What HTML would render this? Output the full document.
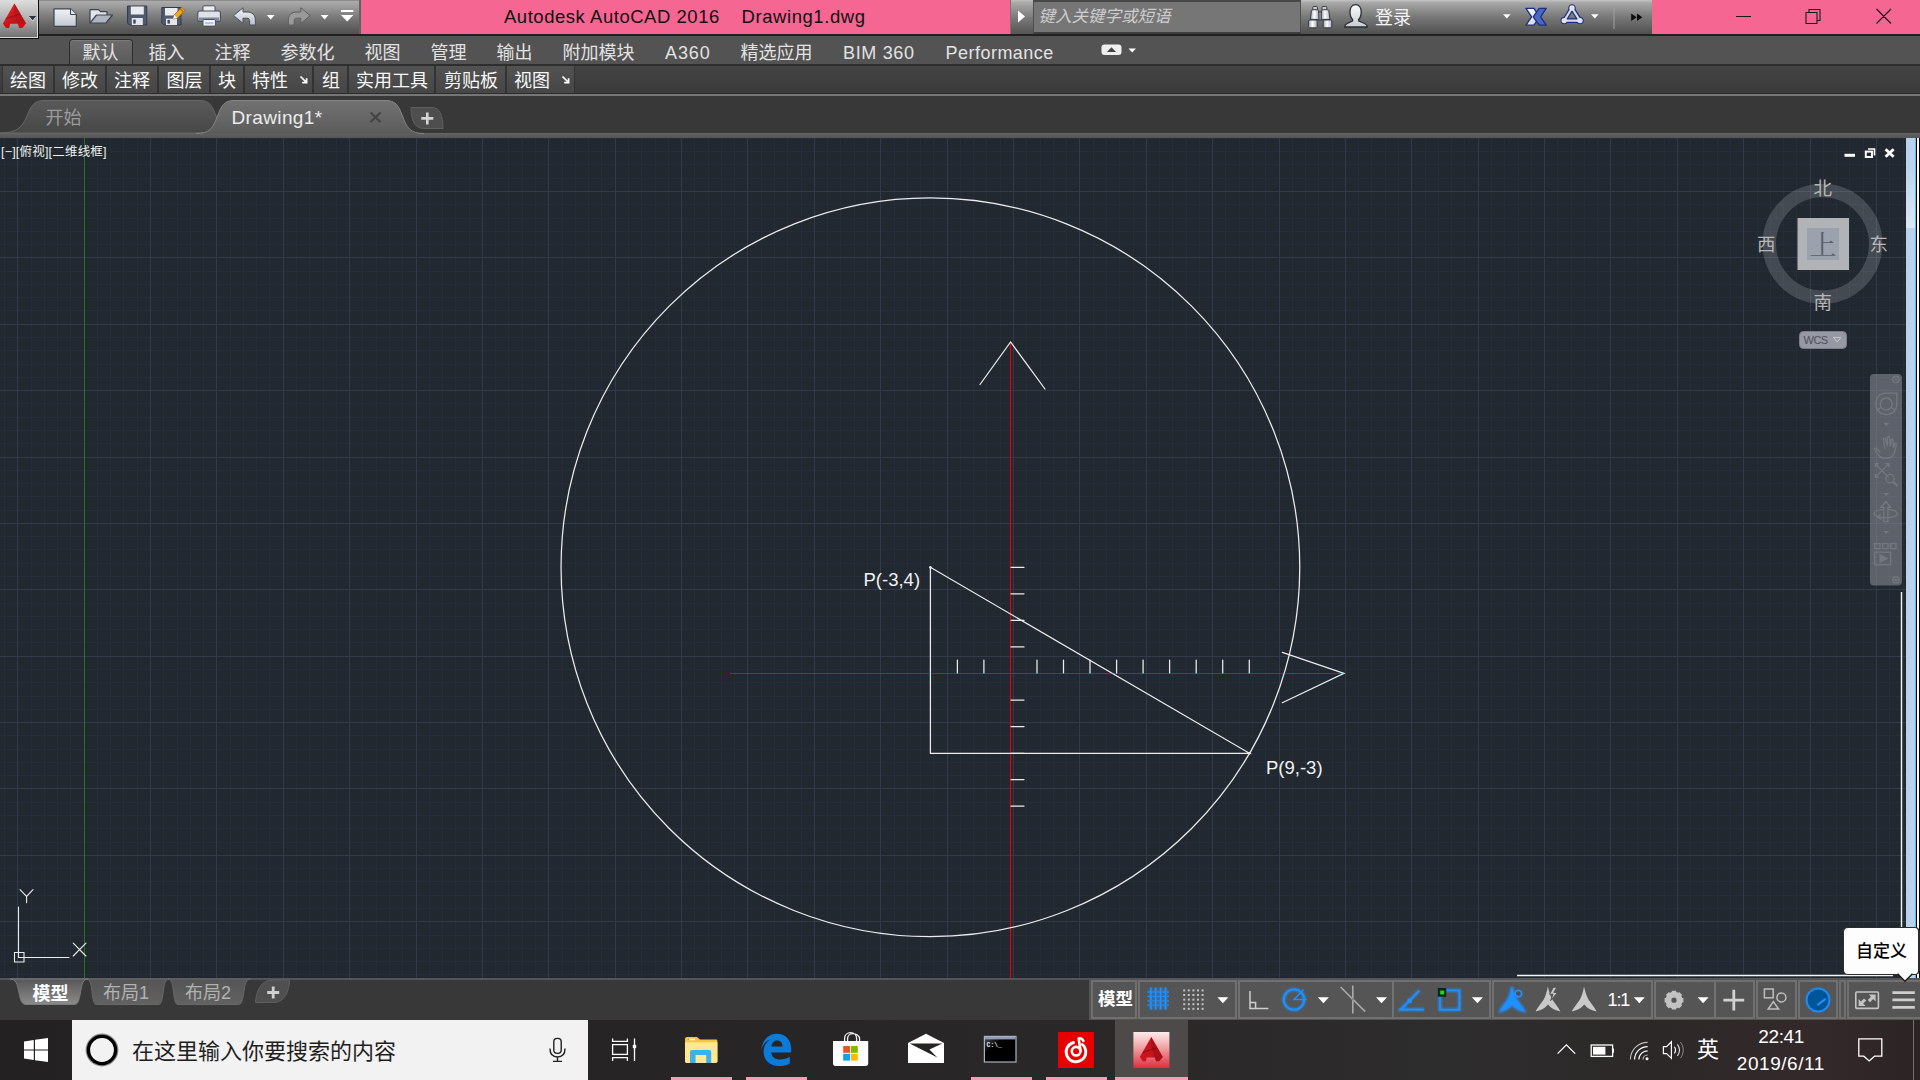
<!DOCTYPE html>
<html lang="zh-CN">
<head>
<meta charset="utf-8">
<title>Autodesk AutoCAD 2016 Drawing1.dwg</title>
<style>
*{box-sizing:border-box;margin:0;padding:0}
html,body{width:1920px;height:1080px;overflow:hidden;background:#383838}
body{position:relative;font-family:"Liberation Sans","Noto Sans CJK SC",sans-serif;color:#e6e6e6}
.abs{position:absolute}
.t{position:absolute;white-space:nowrap;line-height:1}
/* ---- title row ---- */
#title{left:0;top:0;width:1920px;height:34px;background:#f56692}
#appbtn{left:0;top:0;width:39px;height:39px;background:linear-gradient(#dedede,#b4b4b4 45%,#6e6e6e);border-right:1px solid #0c0c0c;border-bottom:1px solid #0c0c0c;box-shadow:inset -1px -1px 0 #d8d8d8;z-index:5}
#qat{left:39px;top:0;width:322px;height:34px;background:linear-gradient(#8c8c8c 0,#8c8c8c 1px,#adadad 1px,#a4a4a4 4px,#7a7a7a 50%,#595959 88%,#505050 100%);border-right:2px solid #5e6464}
#ttext,#ttext2{left:504px;top:7.5px;font-size:18.5px;color:#111;letter-spacing:.53px;z-index:7}
#ttext2{left:741.5px;letter-spacing:.57px}
#sbtn{left:1010px;top:0;width:24px;height:34px;background:linear-gradient(#bdbdbd 0,#a8a8a8 3px,#777 55%,#555 100%);border-left:1px solid #8a6a74}
#sbox{left:1033px;top:0;width:268px;height:34px;background:#767676;border:1px solid #4e4e4e;border-top:2px solid #484848;border-bottom:2px solid #3e3e3e}
#info{left:1301px;top:0;width:351px;height:34px;background:linear-gradient(#c4c4c4 0,#a6a6a6 3px,#787878 50%,#585858 90%,#4e4e4e 100%)}
/* ---- menu row ---- */
#menu{left:0;top:34px;width:1920px;height:31px;background:#535353;border-top:2px solid #202222}
.m{top:9.5px;font-size:18px;color:#e2e2e2}
#tabdef{left:69px;top:39px;width:63.5px;height:26px;background:linear-gradient(#6c6c6c,#595959);border:1px solid #2c2c2c;border-bottom:none;border-radius:4px 4px 0 0;box-shadow:inset 0 1px 0 #7c7c7c}
/* ---- panel row ---- */
#panel{left:0;top:64px;width:1920px;height:30px;background:linear-gradient(#2e2e2e 0,#2e2e2e 2px,#444 2px,#3a3a3a 29px,#2e2e2e 29px)}
.pb{position:absolute;top:2px;height:27px;background:linear-gradient(#525252,#464646);box-shadow:-1px 0 0 #333,1px 0 0 #333}
.p{top:8px;font-size:18px;color:#f8f8f8}
#pline{left:0;top:94px;width:1920px;height:2px;background:#767676}
/* ---- file tab row ---- */
#ftabs{left:0;top:96px;width:1920px;height:37px;background:#383838}
#fstripe{left:0;top:133px;width:1920px;height:5px;background:linear-gradient(#666 0,#5c5c5c 2px,#555 100%)}
/* ---- drawing ---- */
#draw{left:0;top:138px;width:1906px;height:840px;background:#212830;overflow:hidden}
/* ---- status ---- */
#status{left:0;top:978px;width:1920px;height:42px;background:#383838;border-top:2px solid #555}
.sc{position:absolute;top:980px;height:39px;border:2px solid #707070;background:#555}
/* ---- taskbar ---- */
#task{left:0;top:1020px;width:1920px;height:60px;background:linear-gradient(90deg,#232121 0,#262424 35%,#2a2828 62%,#2e2d2d 76%,#2c2828 86%,#34292a 95%,#2b2324 100%)}
.ul{position:absolute;top:57px;height:3px;background:#f79bb6}
#search{left:72px;top:0;width:516px;height:60px;background:#f2f2f2}
</style>
</head>
<body>
<!-- TITLE ROW -->
<div id="title" class="abs"></div>
<div id="qat" class="abs"></div>
<div id="appbtn" class="abs"></div>
<div id="ttext" class="t">Autodesk AutoCAD 2016</div><div id="ttext2" class="t">Drawing1.dwg</div>
<div id="sbtn" class="abs"></div>
<div id="sbox" class="abs"></div>
<div id="info" class="abs"></div>
<svg class="abs" style="left:0;top:0;z-index:6" width="1920" height="38" viewBox="0 0 1920 38">
<defs>
<linearGradient id="gPage" x1="0" y1="0" x2="0" y2="1"><stop offset="0" stop-color="#f2f3f7"/><stop offset="1" stop-color="#c4c8d2"/></linearGradient>
<linearGradient id="gRedA" x1="0" y1="0" x2="1" y2="1"><stop offset="0" stop-color="#e8262a"/><stop offset="1" stop-color="#a80c10"/></linearGradient>
<linearGradient id="gUndo" x1="0" y1="0" x2="0" y2="1"><stop offset="0" stop-color="#f4f5f8"/><stop offset="1" stop-color="#b9bec9"/></linearGradient>
</defs>
<!-- app logo A -->
<path d="M14.4 3.4L25.9 23.3L22.2 27.7H19.3L18.1 23.8H10L9 27.7H5.9L3 23.3Z" fill="url(#gRedA)"/>
<path d="M14.4 3.4L25.9 23.3L22.2 27.7H19.3L18.1 23.8L14 12Z" fill="#b8141a" opacity=".75"/>
<path d="M6.2 18L19.4 13.6L20 14.8L5.4 19.6Z" fill="#7e0c10" opacity=".6"/>
<path d="M3 23.3L5.9 27.7H9L9.8 24.4ZM25.9 23.3L22.2 27.7H19.3L18.4 24.4Z" fill="#e0080c"/>
<path d="M29 17H36.2L32.6 21.4Z" fill="#fff" opacity=".8"/><path d="M28.9 16H36.3L32.6 20.4Z" fill="#2c3442"/>
<!-- new -->
<path d="M54 8.8H70.5L76.3 14.5V26.3H54Z" fill="url(#gPage)" stroke="#3d424d" stroke-width="1.2" stroke-linejoin="round"/>
<path d="M70.5 8.8V14.5H76.3" fill="#dfe2ea" stroke="#3d424d" stroke-width="1"/>
<!-- open -->
<path d="M90 22.8V9.6H98.5L100.5 11.6H107V15" fill="#e2e5ec" stroke="#3d424d" stroke-width="1.2" stroke-linejoin="round"/>
<path d="M90 23L96.5 15H112.5L106 23Z" fill="#aeb4c2" stroke="#3d424d" stroke-width="1.2" stroke-linejoin="round"/>
<!-- save -->
<path d="M127.5 6H146.8V25H129.5L127.5 23Z" fill="#4f5a6e" stroke="#343c4b" stroke-width="1"/>
<rect x="130.8" y="6.5" width="13" height="8" fill="#e9ebf0"/><rect x="131.8" y="18" width="11" height="7" fill="#e4e6ec"/><rect x="133.3" y="19.6" width="2.4" height="4" fill="#3d4656"/>
<!-- save as -->
<path d="M161.8 7.5H181V25H163.8L161.8 23Z" fill="#4f5a6e" stroke="#343c4b" stroke-width="1"/>
<rect x="165" y="8" width="12.5" height="7.5" fill="#e9ebf0"/><rect x="166" y="18.6" width="11" height="6.4" fill="#e4e6ec"/><rect x="167.5" y="19.8" width="2.4" height="3.8" fill="#3d4656"/>
<path d="M173 19L174.3 14.8L181.8 7.3L185 10.5L177.5 18Z" fill="#f2a61c" stroke="#8a5a10" stroke-width=".7"/><path d="M173 19L174.3 14.8L177.5 18Z" fill="#f3efe6"/><path d="M180.3 8.8L183.5 12" stroke="#c56a14" stroke-width="1.6"/>
<!-- print -->
<rect x="203" y="5.8" width="12" height="6" rx="1" fill="#eceef2" stroke="#4a4f5a" stroke-width="1"/>
<rect x="197.8" y="11" width="22.6" height="10.5" rx="2" fill="#dfe2e9" stroke="#4a4f5a" stroke-width="1.1"/>
<rect x="199" y="17.5" width="20" height="3.6" fill="#7d8aa0"/>
<rect x="203" y="19.5" width="12.4" height="6.6" rx="1" fill="#f0f3f8" stroke="#4a4f5a" stroke-width="1"/><rect x="205" y="22.2" width="8.4" height="2" fill="#a9c7ee"/>
<!-- undo -->
<path d="M233.6 15.6L243 7.8V12H247C252.4 12 255.4 15 255.4 20.4V25H249.6V20.6C249.6 18.8 248.6 18.2 247 18.2H243V23.4Z" fill="url(#gUndo)" stroke="#4a4f5a" stroke-width="1" stroke-linejoin="round"/>
<path d="M266.8 15H274.6L270.7 19.4Z" fill="#fff"/>
<!-- redo -->
<path d="M310.2 15.6L300.8 7.8V12.0H296.8C291.4 12.0 288.4 15.0 288.4 20.4V25.0H294.2V20.6C294.2 18.8 295.2 18.2 296.8 18.2H300.8V23.4Z" fill="#9a9a9a" stroke="#5e5e5e" stroke-width="1" stroke-linejoin="round"/>
<path d="M320.7 15H328.5L324.6 19.4Z" fill="#fff"/>
<path d="M341 10H353.4V12H341ZM341 14.9H353.4L347.2 21.4Z" fill="#fff"/>
<!-- search arrow -->
<path d="M1018 10.5L1025 16.5L1018 22.5Z" fill="#fff"/>
<!-- window controls -->
<path d="M1736 16.5H1751M1806 12.5H1817V23.5H1806ZM1809 12.5V9.5H1820V20.5H1817M1876.5 9L1891 23.5M1891 9L1876.5 23.5" stroke="#1a1a1a" stroke-width="1.1" fill="none"/>
</svg>

<span class="t" style="left:1038.5px;top:7.5px;font-size:16.5px;font-style:italic;color:#cdcdcd;z-index:7;letter-spacing:0">键入关键字或短语</span>
<span class="t" style="left:1375px;top:8.5px;font-size:18px;color:#f4f4f4;z-index:7">登录</span>
<svg class="abs" style="left:1300px;top:0;z-index:7" width="352" height="34" viewBox="1300 0 352 34">
<defs><linearGradient id="gBino" x1="0" y1="0" x2="0" y2="1"><stop offset="0" stop-color="#7c828c"/><stop offset=".5" stop-color="#e8eaee"/><stop offset="1" stop-color="#f6f7f9"/></linearGradient>
<linearGradient id="gBinoH" x1="0" y1="0" x2="1" y2="0"><stop offset="0" stop-color="#9da1aa"/><stop offset=".45" stop-color="#fff"/><stop offset="1" stop-color="#a9adb6"/></linearGradient>
<linearGradient id="gXw" x1="0" y1="0" x2="1" y2="1"><stop offset="0" stop-color="#ffffff"/><stop offset="1" stop-color="#c9cede"/></linearGradient>
<linearGradient id="gUsr" x1="0" y1="0" x2="0" y2="1"><stop offset="0" stop-color="#fafafa"/><stop offset="1" stop-color="#c9ccd2"/></linearGradient></defs>
<!-- binoculars -->
<g stroke="#383b43" stroke-width="1">
<rect x="1312.8" y="6.4" width="4.6" height="4" rx="1" fill="#c9ccd2"/><rect x="1322" y="6.4" width="4.8" height="4" rx="1" fill="#c9ccd2"/>
<rect x="1318.4" y="12" width="3.6" height="8" fill="#9a9ea8"/>
<path d="M1311.4 10.6C1311.4 9.4 1318.6 9.4 1318.6 10.6L1319 19.4H1310.4Z" fill="url(#gBinoH)"/><path d="M1321.4 10.6C1321.4 9.4 1328.8 9.4 1328.8 10.6L1330 19.4H1321.2Z" fill="url(#gBinoH)"/>
<rect x="1308.6" y="20" width="8.6" height="7.8" rx="1" fill="url(#gBinoH)"/><rect x="1323.2" y="20" width="8.6" height="7.8" rx="1" fill="url(#gBinoH)"/>
</g>
<!-- user -->
<path d="M1344.6 27C1344.6 23.5 1349 22.8 1352.6 21V19.4C1350.6 17.6 1350 15 1350 12C1350 7.6 1352.2 4.6 1355.6 4.6C1359 4.6 1361.2 7.6 1361.2 12C1361.2 15 1360.6 17.6 1358.6 19.4V21C1362.2 22.8 1367.4 23.5 1367.4 27Z" fill="url(#gUsr)" stroke="#2a2e38" stroke-width="1.3" stroke-linejoin="round"/>
<path d="M1503 14.2H1510.6L1506.8 18.4Z" fill="#fff"/>
<!-- X exchange -->
<path d="M1526 8.4H1534L1539.6 16.8L1534 25.2H1526L1531.6 16.8Z" fill="url(#gXw)" stroke="#1c2f86" stroke-width="1.3" stroke-linejoin="round"/>
<path d="M1546.2 8.4H1539.2L1533.2 16.8L1539.2 25.2H1546.2L1540.6 16.8Z" fill="#4a68c2" stroke="#1c2f86" stroke-width="1.3" stroke-linejoin="round"/>
<!-- A360 -->
<g fill="none" stroke-linejoin="round"><path d="M1572 8L1580 20.6H1564.2Z" stroke="#1c2f86" stroke-width="4.6"/><circle cx="1572" cy="8" r="3.3" fill="#1c2f86" stroke="#1c2f86" stroke-width="1"/><circle cx="1564.2" cy="20.6" r="3.3" fill="#1c2f86" stroke="#1c2f86" stroke-width="1"/><circle cx="1580" cy="20.6" r="3.3" fill="#1c2f86" stroke="#1c2f86" stroke-width="1"/>
<path d="M1572 8L1580 20.6H1564.2Z" stroke="#dadbdf" stroke-width="2.2"/><circle cx="1572" cy="8" r="2.7" fill="#e2e3e6"/><circle cx="1564.2" cy="20.6" r="2.7" fill="#e2e3e6"/><circle cx="1580" cy="20.6" r="2.7" fill="#e2e3e6"/></g>
<path d="M1591 14.2H1598.6L1594.8 18.4Z" fill="#fff"/>
<path d="M1614 8V29" stroke="#a0a0a0" stroke-width="1"/>
<path d="M1631.2 13.4L1636.6 17.2L1631.2 21ZM1637 13.4L1642.4 17.2L1637 21Z" fill="#0c0c0c"/>
</svg>
<!-- MENU ROW -->
<div id="menu" class="abs"></div>
<div id="tabdef" class="abs"></div>
<!-- PANEL ROW -->
<div id="panel" class="abs"></div>
<div id="menutxt" class="abs" style="left:0;top:34px;width:1920px;height:31px">
<span class="t m" style="left:82.5px">默认</span>
<span class="t m" style="left:148.5px">插入</span>
<span class="t m" style="left:214.5px">注释</span>
<span class="t m" style="left:280.5px">参数化</span>
<span class="t m" style="left:364.5px">视图</span>
<span class="t m" style="left:430.5px">管理</span>
<span class="t m" style="left:496.5px">输出</span>
<span class="t m" style="left:562.5px">附加模块</span>
<span class="t m" style="left:665px;letter-spacing:.9px">A360</span>
<span class="t m" style="left:740.5px">精选应用</span>
<span class="t m" style="left:843px;letter-spacing:.66px">BIM 360</span>
<span class="t m" style="left:945.5px;letter-spacing:.48px">Performance</span>
<svg class="abs" style="left:1100px;top:8px" width="40" height="16" viewBox="0 0 40 16"><rect x="1.5" y="2.5" width="20" height="10.5" rx="3" fill="#efefef"/><path d="M7 10L11.5 5.2L16 10Z" fill="#444"/><path d="M28.5 6.5H36L32.2 10.6Z" fill="#fff"/></svg>
</div>
<div id="paneltxt" class="abs" style="left:0;top:64px;width:1920px;height:30px">
<span class="pb" style="left:3px;width:50px"></span><span class="pb" style="left:55px;width:50px"></span><span class="pb" style="left:107px;width:50px"></span><span class="pb" style="left:159px;width:50px"></span><span class="pb" style="left:211px;width:32px"></span><span class="pb" style="left:245px;width:67px"></span><span class="pb" style="left:314px;width:33px"></span><span class="pb" style="left:349px;width:85px"></span><span class="pb" style="left:436px;width:69px"></span><span class="pb" style="left:507px;width:67px"></span>
<span class="t p" style="left:10px">绘图</span>
<span class="t p" style="left:62px">修改</span>
<span class="t p" style="left:114px">注释</span>
<span class="t p" style="left:166.5px">图层</span>
<span class="t p" style="left:218px">块</span>
<span class="t p" style="left:252px">特性</span>
<span class="t p" style="left:322px">组</span>
<span class="t p" style="left:356px">实用工具</span>
<span class="t p" style="left:444px">剪贴板</span>
<span class="t p" style="left:514px">视图</span>
<svg class="abs" style="left:298px;top:10px" width="12" height="12" viewBox="0 0 12 12"><path d="M2.5 2.5L8 8M4.2 8.6H8.6V4.2" stroke="#fff" stroke-width="1.7" fill="none"/></svg>
<svg class="abs" style="left:560px;top:10px" width="12" height="12" viewBox="0 0 12 12"><path d="M2.5 2.5L8 8M4.2 8.6H8.6V4.2" stroke="#fff" stroke-width="1.7" fill="none"/></svg>
</div>
<div id="pline" class="abs"></div>
<!-- FILE TABS -->
<div id="ftabs" class="abs"></div>
<div id="fstripe" class="abs"></div>
<svg class="abs" style="left:0;top:96px" width="1920" height="42" viewBox="0 96 1920 42">
<defs>
<linearGradient id="gT1" x1="0" y1="0" x2="0" y2="1"><stop offset="0" stop-color="#5a5a5a"/><stop offset="1" stop-color="#474747"/></linearGradient>
<linearGradient id="gT2" x1="0" y1="0" x2="0" y2="1"><stop offset="0" stop-color="#727272"/><stop offset="1" stop-color="#5b5b5b"/></linearGradient>
</defs>
<path d="M0 133C16 133 22 128 27 116C31 105 35 100.5 44 100.5H200C209 100.5 212 105 216 116C220 128 225 133 236 133Z" fill="url(#gT1)" stroke="#666" stroke-width="1"/>
<path d="M196 134C210 134 213 128 217.5 116C221.5 105 225 100.5 234 100.5H386C395 100.5 398.5 105 402.5 116C407 128 410 134 424 134Z" fill="url(#gT2)"/><path d="M196 133.5C210 133.5 213 128 217.5 116C221.5 105 225 100.5 234 100.5H386C395 100.5 398.5 105 402.5 116C407 128 410 133.5 424 133.5" fill="none" stroke="#858585" stroke-width="1"/>
<path d="M411 107.5H432C439 107.5 443 114 443 128.5H424C415 128.5 411 121 411 107.5Z" fill="#4e4e4e" stroke="#5e5e5e" stroke-width="1"/>
<path d="M427.3 112.4V124.4M421.3 118.4H433.3" stroke="#d4d4d4" stroke-width="2.6"/>
<path d="M370.5 112.5L380.5 122M380.5 112.5L370.5 122" stroke="#454545" stroke-width="2.4"/>
</svg>
<span class="t" style="left:45.5px;top:108.5px;font-size:18px;color:#9c9c9c">开始</span>
<span class="t" style="left:231.5px;top:108px;font-size:19px;letter-spacing:.37px;color:#ececec">Drawing1*</span>

<!-- DRAWING -->
<div id="draw" class="abs">
<svg class="abs" style="left:0;top:0" width="1906" height="840" viewBox="0 138 1906 840">
<path d="M4.5 138V978M31.5 138V978M44.5 138V978M57.5 138V978M70.5 138V978M97.5 138V978M110.5 138V978M123.5 138V978M137.5 138V978M163.5 138V978M177.5 138V978M190.5 138V978M203.5 138V978M230.5 138V978M243.5 138V978M256.5 138V978M269.5 138V978M296.5 138V978M309.5 138V978M323.5 138V978M336.5 138V978M362.5 138V978M376.5 138V978M389.5 138V978M402.5 138V978M429.5 138V978M442.5 138V978M455.5 138V978M469.5 138V978M495.5 138V978M508.5 138V978M522.5 138V978M535.5 138V978M562.5 138V978M575.5 138V978M588.5 138V978M601.5 138V978M628.5 138V978M641.5 138V978M655.5 138V978M668.5 138V978M694.5 138V978M708.5 138V978M721.5 138V978M734.5 138V978M761.5 138V978M774.5 138V978M787.5 138V978M801.5 138V978M827.5 138V978M840.5 138V978M854.5 138V978M867.5 138V978M894.5 138V978M907.5 138V978M920.5 138V978M933.5 138V978M960.5 138V978M973.5 138V978M986.5 138V978M1000.5 138V978M1026.5 138V978M1040.5 138V978M1053.5 138V978M1066.5 138V978M1093.5 138V978M1106.5 138V978M1119.5 138V978M1133.5 138V978M1159.5 138V978M1172.5 138V978M1186.5 138V978M1199.5 138V978M1225.5 138V978M1239.5 138V978M1252.5 138V978M1265.5 138V978M1292.5 138V978M1305.5 138V978M1318.5 138V978M1332.5 138V978M1358.5 138V978M1371.5 138V978M1385.5 138V978M1398.5 138V978M1425.5 138V978M1438.5 138V978M1451.5 138V978M1464.5 138V978M1491.5 138V978M1504.5 138V978M1518.5 138V978M1531.5 138V978M1557.5 138V978M1571.5 138V978M1584.5 138V978M1597.5 138V978M1624.5 138V978M1637.5 138V978M1650.5 138V978M1664.5 138V978M1690.5 138V978M1703.5 138V978M1717.5 138V978M1730.5 138V978M1757.5 138V978M1770.5 138V978M1783.5 138V978M1796.5 138V978M1823.5 138V978M1836.5 138V978M1849.5 138V978M1863.5 138V978M1889.5 138V978M1903.5 138V978M0 138.5H1906M0 151.5H1906M0 164.5H1906M0 178.5H1906M0 204.5H1906M0 218.5H1906M0 231.5H1906M0 244.5H1906M0 271.5H1906M0 284.5H1906M0 297.5H1906M0 310.5H1906M0 337.5H1906M0 350.5H1906M0 364.5H1906M0 377.5H1906M0 403.5H1906M0 417.5H1906M0 430.5H1906M0 443.5H1906M0 470.5H1906M0 483.5H1906M0 496.5H1906M0 510.5H1906M0 536.5H1906M0 549.5H1906M0 563.5H1906M0 576.5H1906M0 603.5H1906M0 616.5H1906M0 629.5H1906M0 642.5H1906M0 669.5H1906M0 682.5H1906M0 696.5H1906M0 709.5H1906M0 735.5H1906M0 749.5H1906M0 762.5H1906M0 775.5H1906M0 802.5H1906M0 815.5H1906M0 828.5H1906M0 842.5H1906M0 868.5H1906M0 881.5H1906M0 895.5H1906M0 908.5H1906M0 935.5H1906M0 948.5H1906M0 961.5H1906M0 974.5H1906" stroke="#262d38" stroke-width="1" fill="none" shape-rendering="crispEdges"/>
<path d="M17.5 138V978M150.5 138V978M216.5 138V978M283.5 138V978M349.5 138V978M416.5 138V978M482.5 138V978M548.5 138V978M615.5 138V978M681.5 138V978M747.5 138V978M814.5 138V978M880.5 138V978M947.5 138V978M1013.5 138V978M1079.5 138V978M1146.5 138V978M1212.5 138V978M1279.5 138V978M1345.5 138V978M1411.5 138V978M1478.5 138V978M1544.5 138V978M1610.5 138V978M1677.5 138V978M1743.5 138V978M1810.5 138V978M1876.5 138V978M0 191.5H1906M0 257.5H1906M0 324.5H1906M0 390.5H1906M0 457.5H1906M0 523.5H1906M0 589.5H1906M0 656.5H1906M0 722.5H1906M0 788.5H1906M0 855.5H1906M0 921.5H1906" stroke="#323949" stroke-width="1" fill="none" shape-rendering="crispEdges"/>
<path d="M84.5 138V978" stroke="#267326" stroke-width="1" shape-rendering="crispEdges"/>
<!-- red axes -->
<path d="M1010.5 342V978M730 673.5H1344" stroke="#e6000c" stroke-width="1.2" fill="none"/>
<g stroke="#ececec" stroke-width="1.25" fill="none" stroke-linecap="round">
<circle cx="930.4" cy="567.3" r="369.35"/>
<path d="M980 384.5L1010.6 342L1045 389"/>
<path d="M1282.3 652.3L1344 673.4L1282.3 702.7"/>
<path d="M930.4 567.3V753.3H1249.5Z"/>
<path d="M957.4 660V673M983.9 660V673M1037 660V673M1063.5 660V673M1090 660V673M1116.6 660V673M1143.1 660V673M1169.6 660V673M1196.2 660V673M1222.7 660V673M1249.3 660V673"/>
<path d="M1011 567.3H1024M1011 593.8H1024M1011 620.3H1024M1011 646.9H1024M1011 700H1024M1011 726.5H1024M1011 753.3H1024M1011 779.6H1024M1011 806.1H1024"/>
<!-- ucs icon -->
<path d="M18.5 907V957.5H69M14.5 952.5H24V962H14.5ZM20 889.7L26.6 896.4L33 889.7M26.6 896.4V902.7M73.2 943.2L85.9 956M85.9 943.2L73.2 956" stroke-width="1.1"/>
</g>
<circle cx="930.4" cy="567.3" r="1.3" fill="#ececec"/><circle cx="1249.5" cy="753.3" r="1.3" fill="#ececec"/>
<text x="863.5" y="585.5" font-family="Liberation Sans, sans-serif" font-size="18.5" fill="#f2f2f2">P(-3,4)</text>
<text x="1266" y="773.5" font-family="Liberation Sans, sans-serif" font-size="18.5" fill="#f2f2f2">P(9,-3)</text>
<!-- stray white outline -->
<path d="M1901.5 592V974M1517 975.5H1893" stroke="#f4f4f4" stroke-width="1.4" fill="none"/>
</svg>
</div>
<!-- right strip -->
<div class="abs" style="left:1906px;top:138px;width:9px;height:840px;background:linear-gradient(#b9d1ed 0,#bcd3ee 30px,#dbe7f5 90px,#b9d1ec 90px,#b9d1ec 100%)"></div>
<div class="abs" style="left:1915px;top:138px;width:1px;height:840px;background:#3fc6ff"></div>
<div class="abs" style="left:1916px;top:138px;width:1px;height:840px;background:#000"></div>
<div class="abs" style="left:1917px;top:138px;width:2px;height:840px;background:#fff"></div>
<div class="abs" style="left:1919px;top:138px;width:1px;height:840px;background:#000"></div>
<!-- viewport label & controls -->
<span class="t" style="left:1px;top:145.5px;font-size:12.5px;letter-spacing:.2px;color:#f0f0f0">[−][俯视][二维线框]</span>
<svg class="abs" style="left:1760px;top:140px" width="146" height="450" viewBox="1760 140 146 450">
<path d="M1844.5 155.3H1855" stroke="#fff" stroke-width="3"/>
<path d="M1868 149H1874.5V155.5" stroke="#fff" stroke-width="1.6" fill="none"/><rect x="1865.8" y="151.6" width="6.2" height="5.4" fill="none" stroke="#fff" stroke-width="2"/>
<path d="M1885.6 149.2L1893.6 156.8M1893.6 149.2L1885.6 156.8" stroke="#fff" stroke-width="2.8"/>
<!-- compass -->
<circle cx="1822.5" cy="243.8" r="53.2" fill="none" stroke="#fff" stroke-opacity=".16" stroke-width="13.5"/>
<rect x="1797.5" y="218" width="51.5" height="52" fill="#b1b3b6"/>
<rect x="1807" y="228" width="32" height="32" fill="#9aa2ae"/>
<!-- WCS -->
<rect x="1799.5" y="331.5" width="47" height="17" rx="4" fill="#9698a4" stroke="#7c7f8b" stroke-width="1"/>
<path d="M1833.4 337.4H1841L1837.2 342Z" fill="none" stroke="#c3c5cc" stroke-width="1"/>
<!-- nav bar -->
<rect x="1870" y="374" width="32" height="211.5" rx="4" fill="#9a9ca3" fill-opacity=".5"/>
<g stroke="#747880" stroke-width="1.3" fill="none">
<circle cx="1896" cy="379.4" r="3.2"/><path d="M1894.2 377.6L1897.8 381.2M1897.8 377.6L1894.2 381.2" stroke-width="1"/>
<circle cx="1896" cy="580" r="3.2"/><path d="M1893.6 579H1898.4L1896 582Z" fill="#747880" stroke="none"/>
<path d="M1876 404C1876 397 1880 393.2 1886 393.2H1896.8V404C1896.8 410.6 1892.4 414.6 1886.4 414.6C1880.4 414.6 1876 410.6 1876 404Z"/><circle cx="1886.2" cy="404" r="6"/><path d="M1881 407.4L1877.6 410M1891.4 407.4L1894.8 410"/>
<path d="M1883.4 423H1889L1886.2 426Z" fill="#747880" stroke="none"/>
<path d="M1880.4 452.6C1878 449.6 1875.6 447.6 1874.6 448.4C1873.6 449.6 1877 452.6 1879.6 456.2C1881.2 458 1883.6 458.2 1887.6 458.2C1892 458.2 1893.8 455.6 1894.8 451.2L1896.4 444.4C1896.6 443 1895 442.6 1894.6 444L1893.4 448L1893 440.2C1893 438.6 1891.2 438.6 1891 440.2L1890.6 446.6L1889.4 437.6C1889.2 436 1887.4 436.2 1887.4 437.8L1887.6 446.6L1885.4 439C1885 437.6 1883.2 438 1883.4 439.6L1885 449"/>
<path d="M1875.4 463.6L1888.6 477.4M1888.6 463.6L1875.4 477.4M1875.4 467V463.6H1878.8M1885.2 463.6H1888.6V467M1875.4 474V477.4H1878.8"/><circle cx="1890" cy="478.6" r="4.2"/><path d="M1893.2 481.8L1897.4 486" stroke-width="2.2"/>
<path d="M1883.4 493H1889L1886.2 496Z" fill="#747880" stroke="none"/>
<path d="M1883.8 521.6V507.4H1881L1885.8 501.4L1890.6 507.4H1887.8V521.6Z"/><path d="M1883.6 509.4C1878 510 1874.2 511.6 1874.2 513.6C1874.2 516 1879.4 517.8 1885.8 517.8C1892.2 517.8 1897.4 516 1897.4 513.6C1897.4 511.6 1893.6 510 1888 509.4"/><path d="M1880.6 514.2L1877 517L1881.4 519.4" />
<path d="M1883.4 531H1889L1886.2 534Z" fill="#747880" stroke="none"/>
<rect x="1874.6" y="543.6" width="5.4" height="5"/><rect x="1882.6" y="543.6" width="5.4" height="5"/><rect x="1890.6" y="543.6" width="5.4" height="5"/><rect x="1874.6" y="552.2" width="16" height="12.6"/><path d="M1880 554.8L1887 558.6L1880 562.2Z" fill="#747880"/>
</g>
</svg>
<span class="t" style="left:1813.5px;top:180px;font-size:18.5px;color:#b6b6b6">北</span>
<span class="t" style="left:1813.5px;top:293.5px;font-size:18.5px;color:#b6b6b6">南</span>
<span class="t" style="left:1757px;top:235.5px;font-size:18.5px;color:#b6b6b6">西</span>
<span class="t" style="left:1869.5px;top:235.5px;font-size:18.5px;color:#b6b6b6">东</span>
<span class="t" style="left:1809.5px;top:229.5px;font-size:27px;color:#5b6068;font-family:'Noto Serif CJK SC','Liberation Serif',serif">上</span>
<span class="t" style="left:1803.5px;top:334.5px;font-size:11px;color:#4c505a;letter-spacing:-.5px">WCS</span>
<!-- tooltip -->
<div class="abs" style="left:1843px;top:927px;width:77px;height:48px;background:#fdfdfd;border:1.5px solid #2c2c2c;border-right-width:2px;border-radius:5px;z-index:20"></div>
<svg class="abs" style="left:1890px;top:970px;z-index:21" width="30" height="14" viewBox="1890 970 30 14"><path d="M1897.5 973.5H1912.5L1905 981Z" fill="#fdfdfd"/><path d="M1897.5 973.8L1905 981.2L1912.5 973.8" fill="none" stroke="#1c1c1c" stroke-width="1.5"/></svg>
<span class="t" style="left:1856px;top:942.5px;font-size:17px;color:#000;font-weight:500;z-index:22">自定义</span>
<!-- STATUS -->
<div id="status" class="abs"></div>
<div class="abs" style="left:1089px;top:978px;width:831px;height:42px;background:#555"></div>
<div class="sc" style="left:1091px;width:46px"></div><div class="sc" style="left:1138px;width:99px"></div><div class="sc" style="left:1238px;width:253px"></div><div class="sc" style="left:1492px;width:161px"></div><div class="sc" style="left:1654px;width:101px"></div><div class="sc" style="left:1756px;width:41px"></div><div class="sc" style="left:1798px;width:40px"></div><div class="sc" style="left:1839px;width:7px"></div><div class="sc" style="left:1847px;width:80px"></div>
<div class="abs" style="left:1392px;top:982px;width:2px;height:36px;background:#727272"></div><div class="abs" style="left:1714px;top:982px;width:2px;height:36px;background:#727272"></div>
<span class="t" style="left:1098px;top:991px;font-size:17.5px;font-weight:bold;color:#fff">模型</span>
<span class="t" style="left:1607.6px;top:991px;font-size:18px;color:#fff"><span style="letter-spacing:-1.2px">1</span><span style="letter-spacing:-1.2px;position:relative;top:-.5px">:</span>1</span>
<svg class="abs" style="left:0;top:978px" width="1920" height="42" viewBox="0 978 1920 42">
<defs>
<linearGradient id="gL1" x1="0" y1="0" x2="0" y2="1"><stop offset="0" stop-color="#565656"/><stop offset="1" stop-color="#8c8c8c"/></linearGradient>
<linearGradient id="gL2" x1="0" y1="0" x2="0" y2="1"><stop offset="0" stop-color="#555"/><stop offset="1" stop-color="#626262"/></linearGradient>
<filter id="glow" x="-40%" y="-40%" width="180%" height="180%"><feGaussianBlur stdDeviation="1.3"/></filter>
</defs>
<!-- layout tabs -->
<path d="M168 979C171.8 979 172.5 984 173.5 991.8C174.5 1000.0 175.2 1004.5 178 1004.5H238.5C241.9 1004.5 242.7 1000.0 243.9 991.8C245.1 984 245.9 979 250.5 979Z" fill="url(#gL2)" stroke="#686868" stroke-width="1"/>
<path d="M86.5 979C90.3 979 91.0 984 92.0 991.8C93.0 1000.0 93.7 1004.5 96.5 1004.5H158.5C161.4 1004.5 162.2 1000.0 163.2 991.8C164.3 984 165.0 979 169 979Z" fill="url(#gL2)" stroke="#686868" stroke-width="1"/>
<path d="M10 979C16.1 979 17.2 984 18.8 991.8C20.4 1000.0 21.5 1004.5 26 1004.5H74.5C78.3 1004.5 79.2 1000.0 80.6 991.8C81.9 984 82.9 979 88 979Z" fill="url(#gL1)" stroke="#7a7a7a" stroke-width="1"/>
<path d="M289.5 980H272C262 980 256 990 255.5 1002.5H274C284 1002.5 289.5 992 289.5 980Z" fill="#4f4f4f" stroke="#5e5e5e" stroke-width="1"/>
<path d="M273.2 986.5V998.5M267.2 992.5H279.2" stroke="#cfcfcf" stroke-width="2.8"/>
<!-- grid icon (blue) -->
<g stroke="#1e90ff" fill="none">
<g filter="url(#glow)" opacity=".8" stroke-width="2.4"><path d="M1150.9 988V1009.4M1155.7 988V1009.4M1160.6 988V1009.4M1165.5 988V1009.4"/></g>
<path d="M1150.9 987.6V1009.4M1155.7 987.6V1009.4M1160.6 987.6V1009.4M1165.5 987.6V1009.4" stroke-width="1.7"/>
<path d="M1147.4 992H1169M1147.4 996.4H1169M1147.4 1000.8H1169M1147.4 1005.2H1169" stroke-width="1.3" stroke-dasharray="2.5 2.4"/>
</g>
<!-- snap dots -->
<g fill="#c4c4c4"><rect x="1183.2" y="989.4" width="2" height="2"/><rect x="1187.8" y="989.4" width="2" height="2"/><rect x="1192.4" y="989.4" width="2" height="2"/><rect x="1197" y="989.4" width="2" height="2"/><rect x="1201.6" y="989.4" width="2" height="2"/><rect x="1183.2" y="994.0" width="2" height="2"/><rect x="1187.8" y="994.0" width="2" height="2"/><rect x="1192.4" y="994.0" width="2" height="2"/><rect x="1197" y="994.0" width="2" height="2"/><rect x="1201.6" y="994.0" width="2" height="2"/><rect x="1183.2" y="998.6" width="2" height="2"/><rect x="1187.8" y="998.6" width="2" height="2"/><rect x="1192.4" y="998.6" width="2" height="2"/><rect x="1197" y="998.6" width="2" height="2"/><rect x="1201.6" y="998.6" width="2" height="2"/><rect x="1183.2" y="1003.2" width="2" height="2"/><rect x="1187.8" y="1003.2" width="2" height="2"/><rect x="1192.4" y="1003.2" width="2" height="2"/><rect x="1197" y="1003.2" width="2" height="2"/><rect x="1201.6" y="1003.2" width="2" height="2"/><rect x="1183.2" y="1007.8" width="2" height="2"/><rect x="1187.8" y="1007.8" width="2" height="2"/><rect x="1192.4" y="1007.8" width="2" height="2"/><rect x="1197" y="1007.8" width="2" height="2"/><rect x="1201.6" y="1007.8" width="2" height="2"/></g>
<path d="M1217.4 997.2H1228.4L1222.9 1003.2Z" fill="#fff"/>
<!-- ortho -->
<path d="M1250 991V1008.4H1268.4M1250 1002.6H1255.6V1008.4" stroke="#cdcdcd" stroke-width="1.5" fill="none"/>
<!-- polar -->
<g stroke="#1e90ff" fill="none"><g filter="url(#glow)" opacity=".8" stroke-width="3"><circle cx="1294" cy="999.6" r="10.2"/></g><circle cx="1294" cy="999.6" r="10.2" stroke-width="1.9"/><path d="M1306.6 999.4H1294L1303.6 989.6" stroke-width="1.5"/></g>
<path d="M1317.9 997.2H1328.9L1323.4 1003.2Z" fill="#fff"/>
<!-- isometric -->
<path d="M1352.8 985.5V1013.5M1340.6 987L1365.2 1011.6" stroke="#a9a9a9" stroke-width="1.6" fill="none"/><circle cx="1352.8" cy="999.3" r="1.3" fill="#888"/>
<path d="M1376.0 997.2H1387.0L1381.5 1003.2Z" fill="#fff"/>
<!-- angle -->
<g stroke="#1e90ff" fill="none"><g filter="url(#glow)" opacity=".8" stroke-width="3"><path d="M1419.4 990.6L1400.6 1009.6H1424"/></g><path d="M1419.4 990.6L1400.6 1009.6H1424" stroke-width="1.7"/><rect x="1407.6" y="998.8" width="4.2" height="4.2" fill="#1e90ff" stroke="none"/></g>
<!-- square w/ green -->
<g stroke="#1e90ff" fill="none"><g filter="url(#glow)" opacity=".8" stroke-width="3"><rect x="1440" y="990.4" width="19.4" height="19.4"/></g><rect x="1440" y="990.4" width="19.4" height="19.4" stroke-width="1.7"/></g>
<rect x="1438.2" y="988.6" width="7.6" height="7.6" fill="#06300a" stroke="#0a1a0c" stroke-width=".8"/><rect x="1440.2" y="990.6" width="3.8" height="3.8" fill="#0be61e"/>
<path d="M1471.9 997.2H1482.9L1477.4 1003.2Z" fill="#fff"/>
<!-- annotation icons -->
<g><g filter="url(#glow)" opacity=".85"><path d="M1512 986.5C1513.2 992 1515 997 1516.8 1000C1519.6 1004 1523 1008 1524.6 1011.5C1520 1010.8 1515.4 1008.5 1512.2 1004.6C1509 1008.5 1504.4 1010.8 1499.8 1011.5C1501.4 1008 1504.8 1004 1507.6 1000C1509.4 997 1511.2 992 1512 986.5Z" fill="#1e90ff" stroke="#1e90ff" stroke-width="2.4"/></g>
<path d="M1512 986.5C1513.2 992 1515 997 1516.8 1000C1519.6 1004 1523 1008 1524.6 1011.5C1520 1010.8 1515.4 1008.5 1512.2 1004.6C1509 1008.5 1504.4 1010.8 1499.8 1011.5C1501.4 1008 1504.8 1004 1507.6 1000C1509.4 997 1511.2 992 1512 986.5Z" fill="#1e90ff"/><circle cx="1518.4" cy="993.6" r="3.3" fill="#4a4f58" stroke="#1e90ff" stroke-width="1.7"/></g>
<path d="M1547.8 986.5C1549.0 992 1550.8 997 1552.6 1000C1555.4 1004 1558.8 1008 1560.4 1011.5C1555.8 1010.8 1551.2 1008.5 1548.0 1004.6C1544.8 1008.5 1540.2 1010.8 1535.6 1011.5C1537.2 1008 1540.6 1004 1543.4 1000C1545.2 997 1547.0 992 1547.8 986.5Z" fill="#c9c9c9"/><path d="M1553.4 987.2L1549.6 994.2H1553L1550.6 1000.6L1557.6 992.4H1553.8L1556.8 987.2Z" fill="#c9c9c9" stroke="#555" stroke-width="1"/>
<path d="M1584 986.5C1585.2 992 1587 997 1588.8 1000C1591.6 1004 1595 1008 1596.6 1011.5C1592 1010.8 1587.4 1008.5 1584.2 1004.6C1581 1008.5 1576.4 1010.8 1571.8 1011.5C1573.4 1008 1576.8 1004 1579.6 1000C1581.4 997 1583.2 992 1584 986.5Z" fill="#c9c9c9"/>
<path d="M1633.8 997.2H1644.8L1639.3 1003.2Z" fill="#fff"/>
<!-- gear -->
<g transform="translate(1674 1000.2)"><circle r="6" fill="none" stroke="#c2c2c2" stroke-width="5"/><g stroke="#c2c2c2" stroke-width="4.4"><path d="M0 -9.4V9.4M-9.4 0H9.4M-6.65 -6.65L6.65 6.65M-6.65 6.65L6.65 -6.65"/></g><circle r="2.6" fill="#555"/></g>
<path d="M1697.6 997.2H1708.6L1703.1 1003.2Z" fill="#fff"/>
<path d="M1733.8 989.8V1010.4M1723.4 1000.1H1744.2" stroke="#d2d2d2" stroke-width="2.8"/>
<!-- shapes -->
<g stroke="#bdbdbd" stroke-width="1.5" fill="none"><rect x="1764.4" y="989" width="8.8" height="8.8"/><circle cx="1781.4" cy="997.4" r="4.5"/><path d="M1773.4 1001.6L1778.6 1009H1768.2Z"/></g>
<!-- blue dial -->
<g><circle cx="1818" cy="1000" r="12" fill="#1e90ff" filter="url(#glow)" opacity=".7"/><circle cx="1818" cy="1000" r="11.4" fill="#005499" stroke="#1e8cf0" stroke-width="1.8"/><path d="M1818 1004.6L1825 999.4" stroke="#1e90ff" stroke-width="2" stroke-linecap="round"/></g>
<!-- fullscreen -->
<g stroke="#c4c4c4" fill="none"><rect x="1855.8" y="992" width="22.6" height="16.4" rx="1" stroke-width="1.6"/></g>
<path d="M1868.6 994.4H1875.6V1001.4L1873.2 999L1870 1002.2L1867.8 1000L1871 996.8ZM1858.6 1006V999L1861 1001.4L1864 998.4L1866.2 1000.6L1863.2 1003.6L1865.6 1006Z" fill="#c4c4c4"/>
<path d="M1892.4 992.6H1914.8M1892.4 999.9H1914.8M1892.4 1007.4H1914.8" stroke="#cdcdcd" stroke-width="2.9"/>
</svg>
<span class="t" style="left:32.5px;top:984.5px;font-size:18px;font-weight:bold;color:#fff">模型</span>
<span class="t" style="left:103px;top:984px;font-size:18px;color:#b2b2b2">布局1</span>
<span class="t" style="left:185px;top:984px;font-size:18px;color:#b2b2b2">布局2</span>
<!-- TASKBAR -->
<div id="task" class="abs">
<div class="abs" style="left:1115px;top:0;width:73px;height:60px;background:#4f4a4a"></div>
<div id="search" class="abs"></div>
<span class="t" style="left:132px;top:20.5px;font-size:22px;color:#1f1f1f">在这里输入你要搜索的内容</span>
<div class="ul" style="left:671px;width:61px"></div><div class="ul" style="left:746px;width:61px"></div><div class="ul" style="left:971px;width:61px"></div><div class="ul" style="left:1046px;width:61px"></div><div class="ul" style="left:1115px;width:73px"></div>
<svg class="abs" style="left:0;top:0" width="1920" height="60" viewBox="0 1020 1920 60">
<defs>
<linearGradient id="gAc" x1="0" y1="0" x2="0" y2="1"><stop offset="0" stop-color="#fdecea"/><stop offset=".4" stop-color="#f3a9ab"/><stop offset="1" stop-color="#dc2f3d"/></linearGradient>
<linearGradient id="gCmd" x1="0" y1="0" x2="1" y2="1"><stop offset="0" stop-color="#555"/><stop offset=".35" stop-color="#000"/></linearGradient>
</defs>
<!-- start -->
<path d="M24 1041.4L33.8 1040V1049.4H24ZM35 1039.8L48 1038V1049.4H35ZM24 1050.6H33.8V1060L24 1058.6ZM35 1050.6H48V1062L35 1060.2Z" fill="#fff"/>
<!-- cortana -->
<circle cx="102" cy="1050" r="15.6" fill="none" stroke="#8a8a8a" stroke-width="1.6"/><circle cx="102" cy="1050" r="13.6" fill="none" stroke="#000" stroke-width="3.4"/>
<!-- mic -->
<g stroke="#222" stroke-width="1.4" fill="none"><rect x="553.8" y="1038.4" width="7.4" height="15" rx="3.4"/><path d="M550 1048.5C550 1054.5 553 1057 557.5 1057C562 1057 565 1054.5 565 1048.5M557.5 1057V1061M553 1061.4H562"/></g>
<!-- task view -->
<g stroke="#fff" stroke-width="1.3" fill="none"><rect x="612.6" y="1044.6" width="14.8" height="9.8"/><path d="M612.6 1038.6V1041.4H627.4V1038.6M612.6 1061V1057.6H627.4V1061M634.5 1038.6V1061"/></g><rect x="632.8" y="1044.8" width="3.4" height="3.4" fill="#fff"/>
<!-- explorer -->
<path d="M685 1039C685 1037.8 685.8 1037 687 1037H697L700 1039.6H716C716.8 1039.6 717.4 1040.2 717.4 1041V1062H685Z" fill="#f3c83f"/>
<path d="M685 1042.2H717.4V1061.6C717.4 1062.4 716.8 1063 716 1063H686.4C685.6 1063 685 1062.4 685 1061.6Z" fill="#ffe793"/>
<rect x="687.6" y="1038.8" width="7.4" height="1.4" fill="#fff"/><rect x="687.6" y="1038.8" width="1.6" height="1.4" fill="#38b0ea"/>
<path d="M690 1063V1052C690 1050.8 690.8 1050 692 1050H709.2C710.4 1050 711.2 1050.8 711.2 1052V1063H706.2V1055H695.6V1063Z" fill="#3cb2ea"/>
<!-- edge -->
<path d="M761.4 1049.2C762.4 1040 768.6 1033.8 777 1033.8C786 1033.8 791.2 1040.4 791.2 1049.2V1052.6H771.2C771.6 1057 775 1059.6 780 1059.6C783.6 1059.6 787 1058.6 789.8 1056.8V1063.4C786.6 1065.2 782.8 1066 778.6 1066C769.2 1066 763.6 1060 763.6 1051.6C763.6 1046 766.4 1041.6 770.8 1039.2C765.8 1040.8 762.8 1044.6 761.4 1049.2ZM771.4 1046.6H782.6C782.4 1042.8 780.4 1040.6 777 1040.6C773.8 1040.6 771.8 1043 771.4 1046.6Z" fill="#0a7bd9"/>
<!-- store -->
<path d="M844.6 1041V1038.4C844.6 1034.8 847.4 1032.6 850.6 1032.6C853.8 1032.6 856.6 1034.8 856.6 1038.4V1041M847.6 1041V1038.6C847.6 1035.4 850.2 1033.6 853 1033.6C856 1033.6 859.6 1035.6 859.6 1039V1041" stroke="#f2f2f2" stroke-width="1.3" fill="none"/>
<path d="M833 1041H868.2V1063.6C868.2 1065 867.2 1066 865.8 1066H835.4C834 1066 833 1065 833 1063.6Z" fill="#fff"/>
<rect x="843.2" y="1046" width="6.8" height="6.8" fill="#f25022"/><rect x="851" y="1046" width="6.8" height="6.8" fill="#7fba00"/><rect x="843.2" y="1053.8" width="6.8" height="6.8" fill="#00a4ef"/><rect x="851" y="1053.8" width="6.8" height="6.8" fill="#ffb900"/>
<!-- mail -->
<path d="M908 1043L926 1033.8L944 1043V1063H908Z" fill="#fff"/><path d="M909.6 1043.4H942.4L929.4 1049.4L937.4 1057.6Z" fill="#262323"/>
<!-- cmd -->
<rect x="984.4" y="1036.4" width="31.6" height="25.6" fill="url(#gCmd)" stroke="#a9b3c6" stroke-width="1.2"/><rect x="985" y="1037" width="30.4" height="2.4" fill="#8f9bb0"/>
<text x="986.6" y="1046.6" font-family="Liberation Mono, monospace" font-size="6.4" font-weight="bold" fill="#e8e8e8">C:\_</text>
<!-- netease -->
<rect x="1058" y="1032" width="36" height="36" fill="#e60000"/>
<g fill="none" stroke="#fff" stroke-linecap="round"><path d="M1082.3 1044.5A9.8 9.8 0 1 1 1073.5 1042.5" stroke-width="2.9"/><path d="M1083.4 1040.9C1082.4 1038.6 1080.6 1037.7 1078.8 1038.5C1078.8 1042 1080.4 1047 1080.4 1051.2" stroke-width="2.6"/><circle cx="1076.1" cy="1051.2" r="4.3" stroke-width="2.6"/></g>
<!-- autocad -->
<rect x="1133.4" y="1032" width="36" height="36" fill="url(#gAc)"/>
<g transform="translate(1136.85 1033.6)"><path d="M14.4 3.4L25.9 23.3L22.2 27.7H19.3L18.1 23.8H10L9 27.7H5.9L3 23.3Z" fill="#c9141e"/><path d="M14.4 3.4L25.9 23.3L22.2 27.7H19.3L18.1 23.8L14 12Z" fill="#a30c14" opacity=".8"/><path d="M6.2 18L19.4 13.6L20 14.8L5.4 19.6Z" fill="#7e0c10" opacity=".6"/></g>
<!-- tray -->
<g stroke="#fff" fill="none" stroke-width="1.3"><path d="M1557.6 1053.6L1566.4 1044.8L1575.2 1053.6"/><rect x="1591.2" y="1045" width="21.4" height="11.4"/><path d="M1613.2 1048.6V1052.8" stroke-width="1.6"/>
<path d="M1630.4 1059.6C1630.4 1050 1638 1042.4 1647.6 1042.4" stroke="#bdbdbd" stroke-width="1.1"/><path d="M1634.6 1059.6C1634.6 1052.4 1640.4 1046.6 1647.6 1046.6" stroke-width="1.2"/><path d="M1638.8 1059.6C1638.8 1054.8 1642.8 1050.8 1647.6 1050.8" stroke-width="1.2"/><path d="M1643 1059.6C1643 1057 1645 1055 1647.6 1055" stroke-width="1.2" stroke="#bdbdbd"/>
<path d="M1663.4 1046.6H1666.6L1671.4 1041.8V1058.4L1666.6 1053.6H1663.4Z" stroke-width="1.2"/><path d="M1674.4 1046.8C1675.8 1048.8 1675.8 1051.4 1674.4 1053.4" stroke-width="1.1"/><path d="M1677.4 1044.4C1680 1047.8 1680 1052.4 1677.4 1055.8" stroke-width="1.1" stroke="#d8d8d8"/><path d="M1680.4 1042C1684.2 1047 1684.2 1053.2 1680.4 1058.2" stroke-width="1" stroke="#8a8a8a"/>
<path d="M1858.8 1038.8H1881.8V1056.2H1874.6L1869.2 1061L1863.8 1056.2H1858.8Z" stroke-width="1.3"/></g>
<rect x="1593" y="1046.8" width="12.4" height="7.8" fill="#fff"/><circle cx="1647" cy="1058.8" r="1.5" fill="#fff"/>
<path d="M1913.5 1020V1080" stroke="#777071" stroke-width="1"/>
</svg>
<span class="t" style="left:1697px;top:1038.5px;font-size:22px;color:#fff;top:18.5px">英</span>
<span class="t" style="left:1758.3px;top:6.8px;font-size:19px;color:#fff;letter-spacing:-.4px">22:41</span>
<span class="t" style="left:1736.8px;top:34.4px;font-size:19px;color:#fff;letter-spacing:.55px">2019/6/11</span>
</div>

</body>
</html>
